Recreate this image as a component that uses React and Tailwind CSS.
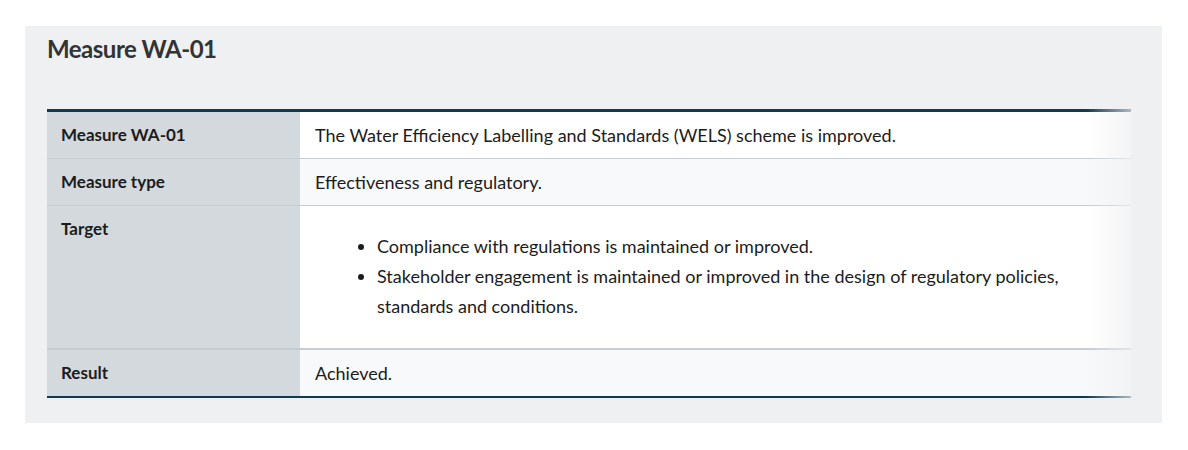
export default function App() {
  const font = { fontFamily: '"Source Sans Pro", Lato, "Open Sans", sans-serif' };
  return (
    <div className="w-[1188px] h-[450px] bg-white pt-[26px] pl-[25px]" style={font}>
      <div className="w-[1137px] h-[397px] bg-[#eff0f2] pl-[22px] pr-[31px] pt-[7px]">
        <h2 className="text-[24px] leading-[32px] font-bold text-[#333] tracking-[-0.5px] mb-[44px]">Measure WA-01</h2>
        <div className="relative">
          <table className="w-full border-collapse text-[18px] text-[#1c1c1c] border-t-[3px] border-b-[2px] border-[#0e3a54]">
            <tbody>
              <tr className="border-b border-[#c5ccd2]">
                <th className="w-[253px] bg-[#d3d9dd] text-left text-[17px] font-bold align-top pl-[14px] pt-[8px] pb-[8px] leading-[30px]">Measure WA-01</th>
                <td className="bg-white pl-[15px] py-[8px] leading-[30px]">The Water Efficiency Labelling and Standards (WELS) scheme is improved.</td>
              </tr>
              <tr className="border-b border-[#c5ccd2]">
                <th className="bg-[#d3d9dd] text-left text-[17px] font-bold align-top pl-[14px] py-[8px] leading-[30px]">Measure type</th>
                <td className="bg-[#f8f9fb] pl-[15px] py-[8px] leading-[30px]">Effectiveness and regulatory.</td>
              </tr>
              <tr className="border-b-2 border-[#c5ccd2]">
                <th className="bg-[#d3d9dd] text-left text-[17px] font-bold align-top pl-[14px] py-[8px] leading-[30px]">Target</th>
                <td className="bg-white pl-[15px] pr-[40px] pt-[8px] pb-[8px] leading-[30px]">
                  <ul className="list-disc pl-[62px] mt-[17px] mb-[19px]">
                    <li>Compliance with regulations is maintained or improved.</li>
                    <li>Stakeholder engagement is maintained or improved in the design of regulatory policies, standards and conditions.</li>
                  </ul>
                </td>
              </tr>
              <tr>
                <th className="bg-[#d3d9dd] text-left text-[17px] font-bold align-top pl-[14px] py-[8px] leading-[30px]">Result</th>
                <td className="bg-[#f8f9fb] pl-[15px] py-[8px] leading-[30px]">Achieved.</td>
              </tr>
            </tbody>
          </table>
          <div className="absolute top-0 right-0 bottom-0 w-[45px] pointer-events-none bg-gradient-to-r from-[rgba(239,240,242,0)] to-[rgba(239,240,242,0.7)]"></div>
        </div>
      </div>
    </div>
  );
}
